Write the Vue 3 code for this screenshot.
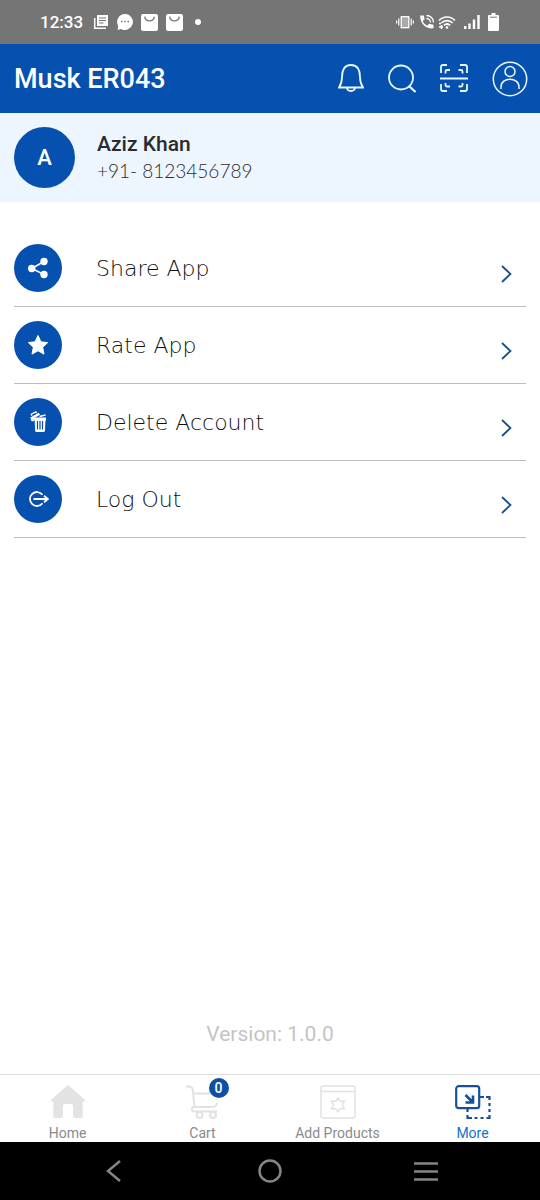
<template>
  <div class="screen">
    <div class="status-bar">
      <div class="status-left">
        <span class="time">12:33</span>
        <svg width="16" height="16" viewBox="0 0 16 16">
          <path d="M4 1h11v11H4z" fill="#fff" />
          <path d="M1.7 4v10.3H13" fill="none" stroke="#fff" stroke-width="1.5" />
          <path d="M6 4h7M6 6.5h7M6 9h4.500" stroke="#757575" stroke-width="1.2" />
        </svg>
        <svg width="16" height="16" viewBox="0 0 16 16">
          <path d="M8 0a8 8 0 1 1-4 15L.6 16l.6-4A8 8 0 0 1 8 0z" fill="#fff" />
          <path d="M4 7.500h1.500M7.300 7.500h1.500M10.500 7.500H12" stroke="#757575" stroke-width="1.400" />
        </svg>
        <svg v-for="n in 2" :key="n" width="17" height="17" viewBox="0 0 16 16">
          <rect width="16" height="16" rx="2" fill="#fff" />
          <path d="M3.500 2.500c.5 5.300 8.500 5.300 9 0" fill="none" stroke="#757575" stroke-width="1.200" />
        </svg>
        <span class="dot"></span>
      </div>
      <div class="status-right">
        <svg width="20" height="18" viewBox="0 0 20 18">
          <rect x="5.200" y="3.700" width="7.600" height="11" fill="#aaa" stroke="#fff" stroke-width="1.300" />
          <path d="M.7 7.500v3M2.800 5.500v7M15.200 5.500v7M17.300 7.500v3" stroke="#fff" stroke-width="1.200" />
        </svg>
        <svg width="14" height="18" viewBox="0 0 14 18">
          <path d="M.3 2.500h3.500l.8 4-2 1.500c1 2.300 2.500 3.700 4.600 4.700L9 10.700l4.500 1v3.600C6 16.500-.5 9.500.3 2.500z" fill="#fff" />
          <path d="M6.500 5.500a4 4 0 0 1 4 4M6.500 2.500a7 7 0 0 1 7 7" fill="none" stroke="#fff" stroke-width="1.300" />
        </svg>
        <svg width="22" height="18" viewBox="0 0 22 18">
          <path d="M1 7.500c4.500-4.700 11.500-4.700 16 0M3.300 10c3.300-3.300 8.100-3.300 11.400 0M6 12.400c2-1.800 4.200-1.800 6.200 0" fill="none" stroke="#fff" stroke-width="1.700" />
          <circle cx="9" cy="14.500" r="1.300" fill="#fff" />
          <path d="M1 10.500h2M1 14h4M3.500 12v4" stroke="#fff" stroke-width="1.500" />
        </svg>
        <svg width="20" height="18" viewBox="0 0 20 18">
          <path d="M1.200 13v3M5.500 10.500V16M10 6.500V16M14.500 2v14" stroke="#fff" stroke-width="2.400" />
        </svg>
        <svg width="12" height="20" viewBox="0 0 12 20">
          <path d="M3.500 1h4v2H10q1 0 1 1v14q0 1-1 1H1q-1 0-1-1V4q0-1 1-1h2.500z" fill="#fff" />
          <path d="M2 5.200h7" stroke="#757575" />
        </svg>
      </div>
    </div>

    <header class="app-header">
      <h1>Musk ER043</h1>
      <div class="actions">
        <button aria-label="Notifications">
          <svg class="line" width="26" height="36" viewBox="0 0 26 36">
            <path d="M1 26.500c2-3 3-5.500 3-10.500 0-7 2.500-12 9-12s9 5 9 12c0 5 1 7.500 3 10.500z" />
            <path d="M9 27c.5 4 7.500 4 8 0" />
          </svg>
        </button>
        <button aria-label="Search">
          <svg class="line" width="28" height="36" viewBox="0 0 28 36">
            <circle cx="13" cy="16.500" r="12" />
            <path d="m21.500 25.500 6 5.500" stroke-width="2.200" />
          </svg>
        </button>
        <button aria-label="Scan code">
          <svg class="line" width="28" height="36" viewBox="1 0 28 36">
            <path d="M2 12V6q0-2 2-2h4M21 4h5q2 0 2 2v6M2 23v5q0 2 2 2h4M21 30h5q2 0 2-2v-5" />
            <path d="M6.500 12.500v-2q0-1.500 1.500-1.500h3M19.500 9H22q1.500 0 1.500 1.500v2M6.500 22v2q0 1.500 1.500 1.500h3M19.500 25.500H22q1.500 0 1.500-1.500v-2M1 17.500h28" />
          </svg>
        </button>
        <button aria-label="Profile">
          <svg class="line thin" width="36" height="36" viewBox="0 0 36 36">
            <circle cx="18" cy="18" r="16.700" />
            <circle cx="18" cy="10.500" r="5" />
            <path d="M9 28v-2c0-10.500 18-10.500 18 0v2" />
          </svg>
        </button>
      </div>
    </header>

    <section class="profile">
      <div class="avatar">A</div>
      <div>
        <div class="name">Aziz Khan</div>
        <div class="phone">+91- 8123456789</div>
      </div>
    </section>

    <main>
      <ul class="menu">
        <li v-for="item in menu" :key="item.icon">
          <button class="menu-item">
            <span class="menu-icon">
              <svg v-if="item.icon === 'share'" width="22" height="22" viewBox="0 0 22 22">
                <path d="M17 4.500 4.700 11.500 17 17.500" fill="none" stroke="#fff" stroke-width="1.500" />
                <circle cx="17" cy="4.500" r="3.700" fill="#fff" />
                <circle cx="4.700" cy="11.500" r="3.700" fill="#fff" />
                <circle cx="17" cy="17.500" r="3.700" fill="#fff" />
              </svg>
              <svg v-else-if="item.icon === 'rate'" width="22" height="22" viewBox="0 0 22 22">
                <path d="m11 1.500 2.900 6.300 6.800.8-5 4.700 1.300 6.800-6-3.300-6 3.300 1.300-6.800-5-4.700 6.800-.8z" fill="#fff" stroke="#fff" stroke-linejoin="round" />
              </svg>
              <svg v-else-if="item.icon === 'delete'" width="22" height="22" viewBox="0 0 22 22">
                <path d="M7 6.500h12v3h-.6l-.4 10q-.1 1.500-1.600 1.500H9.700q-1.500 0-1.600-1.500L7.700 9.500H7z" fill="#fff" />
                <path d="M10.500 10v8.500M13 10v8.500M15.500 10v8.500" stroke="#0651af" stroke-width="1.200" />
                <path d="m3.300 6.600 8.500-4.800 1.200 2-6.200 3.700v2.700H4.500z" fill="#fff" />
                <path d="M5 4.700 4.300 3.300 8.800.9l.8 1.300" fill="none" stroke="#fff" stroke-width="1.300" />
                <path d="m12.500 5.500 6-1.500" stroke="#fff" stroke-width="1.500" />
              </svg>
              <svg v-else width="22" height="22" viewBox="0 0 22 22">
                <path d="M15.500 6.700a7 7 0 1 0 0 8.600" fill="none" stroke="#fff" stroke-width="1.800" />
                <path d="M6.500 11H20M17 7.800l3.800 3.200-3.800 3.200" fill="none" stroke="#fff" stroke-width="1.800" />
              </svg>
            </span>
            <span class="menu-label">{{ item.label }}</span>
            <svg class="chevron" width="12" height="36" viewBox="0 0 12 36">
              <path d="m2 10 8.500 8-8.500 8" />
            </svg>
          </button>
        </li>
      </ul>
      <p class="version">Version: 1.0.0</p>
    </main>

    <nav class="tabs">
      <a
        v-for="tab in tabs"
        :key="tab.icon"
        href="#"
        :class="{ active: tab.icon === active }"
        @click.prevent="active = tab.icon"
      >
        <span class="tab-icon">
          <svg v-if="tab.icon === 'home'" width="36" height="34" viewBox="0 0 36 34">
            <path d="M16.500 1q1.500-1.300 3 0L35 15q1 1.500-1 1.500h-1.300V31q0 2-2 2H25q-2 0-2-2V21q0-2-2-2h-6q-2 0-2 2v10q0 2-2 2H5.300q-2 0-2-2V16.500H2q-2 0-1-1.500z" fill="#e3e3e3" />
          </svg>
          <svg v-else-if="tab.icon === 'cart'" width="36" height="34" viewBox="0 0 36 34" fill="none" stroke="#e1e1e1" stroke-width="2">
            <path d="M1 1.500h2q4 0 4.800 3L9.500 22H27q4.500 0 5-4M8.500 8.500H33M9.500 22H9q-2 0-2 2.200t2 2.300h23" />
            <circle cx="14.500" cy="30" r="3" />
            <circle cx="28" cy="30" r="3" />
          </svg>
          <svg v-else-if="tab.icon === 'add'" width="36" height="34" viewBox="0 0 36 34" fill="none" stroke="#e1e1e1" stroke-width="1.500">
            <rect x="1" y="1" width="34" height="32" rx="2" />
            <path d="M1 6.500h34M18 13l2.200 3.300h4.300L22.300 20l2.200 3.700h-4.300L18 27l-2.200-3.300h-4.300l2.200-3.700-2.200-3.700h4.300z" />
          </svg>
          <svg v-else width="36" height="34" viewBox="0 0 36 34" fill="none" stroke="#174f9b" stroke-width="2.2">
            <rect x="1.200" y="1.200" width="23" height="22" rx="2.500" />
            <path d="m10.500 10 7 7M18 10.500v7h-7.500" stroke-width="2.600" />
            <path d="M25 12h4M31 12h3.500v3M34.500 18v3M34.500 24v3M34.500 30v3h-3M28.500 33h-3M22.500 33h-3M17 33h-4.500v-3M12.500 27v-3" />
          </svg>
          <span v-if="tab.badge !== undefined" class="badge">{{ tab.badge }}</span>
        </span>
        <span class="tab-label">{{ tab.label }}</span>
      </a>
    </nav>

    <div class="system-nav">
      <button aria-label="Back">
        <svg width="26" height="26" viewBox="0 0 26 26">
          <path d="M19 3 7 13l12 10" />
        </svg>
      </button>
      <button aria-label="Home screen">
        <svg width="26" height="26" viewBox="0 0 26 26">
          <circle cx="13" cy="13" r="10.500" />
        </svg>
      </button>
      <button aria-label="Recent apps">
        <svg width="26" height="26" viewBox="0 0 26 26">
          <path d="M1 5.500h24M1 13.500h24M1 21.500h24" />
        </svg>
      </button>
    </div>
  </div>
</template>

<script setup>
import { ref } from "vue";

const active = ref("more");

const menu = [
  { icon: "share", label: "Share App" },
  { icon: "rate", label: "Rate App" },
  { icon: "delete", label: "Delete Account" },
  { icon: "logout", label: "Log Out" },
];

const tabs = [
  { icon: "home", label: "Home" },
  { icon: "cart", label: "Cart", badge: 0 },
  { icon: "add", label: "Add Products" },
  { icon: "more", label: "More" },
];
</script>

<style>
body {
  background: #fff;
}
</style>

<style scoped>
.screen {
  min-height: 100vh;
  display: flex;
  flex-direction: column;
  font-family: Roboto, sans-serif;
  color: #2b2b2f;
}

button {
  padding: 0;
  border: 0;
  background: none;
  font: inherit;
  color: inherit;
  cursor: pointer;
}

svg {
  display: block;
}

.status-bar {
  height: 44px;
  padding: 0 40px;
  display: flex;
  justify-content: space-between;
  align-items: center;
  background: #757575;
  color: #fff;
}

.status-left {
  display: flex;
  align-items: center;
  gap: 8px;
}

.time {
  font-size: 17px;
  font-weight: 500;
  margin-right: 2px;
}

.dot {
  width: 6px;
  height: 6px;
  margin-left: 4px;
  border-radius: 50%;
  background: #fff;
}

.status-right {
  display: flex;
  align-items: center;
  gap: 4px;
}

.app-header {
  height: 69px;
  padding: 0 12px 0 14px;
  display: flex;
  justify-content: space-between;
  align-items: center;
  background: #0651af;
  color: #fff;
}

h1 {
  margin: 0;
  font-size: 27px;
  font-weight: 500;
}

.actions {
  display: flex;
  gap: 24px;
}

.line {
  fill: none;
  stroke: #e9f8ff;
  stroke-width: 1.8;
}

.thin {
  stroke-width: 1.5;
}

.profile {
  padding: 14px;
  display: flex;
  align-items: center;
  gap: 22px;
  background: #edf6ff;
}

.avatar {
  width: 61px;
  height: 61px;
  display: flex;
  justify-content: center;
  align-items: center;
  border-radius: 50%;
  background: #0651af;
  color: #fff;
  font-size: 22px;
  font-weight: 500;
}

.name {
  font-size: 21px;
  line-height: 26px;
  font-weight: 500;
}

.phone {
  font-family: "Century Gothic", Lato, sans-serif;
  font-size: 19px;
  line-height: 28px;
  font-weight: 300;
}

main {
  flex: 1;
  display: flex;
  flex-direction: column;
  padding: 28px 14px;
}

.menu {
  margin: 0;
  padding: 0;
  list-style: none;
}

.menu-item {
  width: 100%;
  padding: 14px 14px 14px 0;
  display: flex;
  align-items: center;
  border-bottom: 1px solid #bdbdbd;
  text-align: left;
}

.menu-icon {
  width: 48px;
  height: 48px;
  margin-right: 34px;
  display: flex;
  justify-content: center;
  align-items: center;
  border-radius: 50%;
  background: #0651af;
}

.menu-label {
  flex: 1;
  font-family: "Century Gothic", "DejaVu Sans", sans-serif;
  font-size: 22px;
  font-weight: 200;
  color: #111;
}

.chevron {
  align-self: flex-end;
  fill: none;
  stroke: #174f8f;
  stroke-width: 1.8;
}

.version {
  margin: auto 0 0;
  text-align: center;
  font-size: 21px;
  line-height: 24px;
  color: #c4c4c4;
}

.tabs {
  display: flex;
  padding-top: 10px;
  border-top: 1px solid #dedede;
}

.tabs a {
  flex: 1;
  display: flex;
  flex-direction: column;
  align-items: center;
  gap: 5px;
  color: #8a8a8a;
  text-decoration: none;
}

.tabs .active {
  color: #1371d6;
}

.tab-icon {
  position: relative;
}

.badge {
  position: absolute;
  top: -7px;
  right: -8px;
  width: 20px;
  height: 20px;
  border-radius: 50%;
  background: #0f4fa3;
  color: #fff;
  font-size: 14px;
  line-height: 20px;
  font-weight: 500;
  text-align: center;
}

.tab-label {
  font-size: 14px;
  line-height: 18px;
}

.system-nav {
  height: 58px;
  padding: 0 36px;
  display: flex;
  align-items: center;
  background: #000;
}

.system-nav button {
  flex: 1;
  display: flex;
  justify-content: center;
}

.system-nav svg {
  fill: none;
  stroke: #858585;
  stroke-width: 2.5;
}
</style>
